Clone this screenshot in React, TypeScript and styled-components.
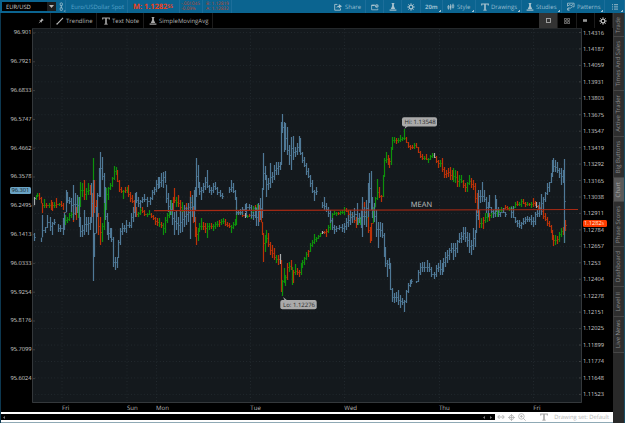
import React from "react";
import styled, { createGlobalStyle } from "styled-components";

const GlobalStyle = createGlobalStyle`
  * {
    box-sizing: border-box;
  }
  body {
    margin: 0;
    background: #000;
    overflow: hidden;
    font-family: "Open Sans", "Noto Sans", sans-serif;
    text-rendering: geometricPrecision;
  }
  svg {
    display: block;
    flex: none;
  }
`;

const Window = styled.div`
  width: 625px;
  height: 423px;
  display: flex;
  flex-direction: column;
  background: #000;
  overflow: hidden;
`;

const TopBar = styled.header`
  height: 13px;
  flex: none;
  display: flex;
  align-items: stretch;
  padding-left: 2px;
  background: #0b6490;
`;

const SymbolBox = styled.div`
  width: 54px;
  height: 9px;
  margin-top: 2px;
  padding-left: 4px;
  display: flex;
  align-items: center;
  justify-content: space-between;
  background: #000;
  color: #d4d4d4;
  font-size: 5.8px;
`;

const DropButton = styled.div`
  width: 9px;
  height: 9px;
  display: flex;
  align-items: center;
  justify-content: center;
  background: #1d1d1d;
`;

interface ICell {
  $w: number;
  $pad?: number;
  $gap?: number;
  $corner?: boolean;
}

const TopCell = styled.div<ICell>`
  width: ${(p) => p.$w}px;
  flex: none;
  padding-left: ${(p) => p.$pad ?? 5}px;
  display: flex;
  align-items: center;
  gap: ${(p) => p.$gap ?? 3}px;
  border-right: 1px solid #1c6e9a;
  background: ${(p) =>
    p.$corner
      ? "linear-gradient(135deg, transparent 50%, #9cc0d2 50%) right 1px bottom 1px / 2px 2px no-repeat"
      : "none"};
  color: #98bfd1;
  font-size: 6px;
  line-height: 8px;
  white-space: nowrap;
`;

const Instrument = styled.span`
  color: #55a2c9;
  font-size: 5.9px;
`;

const Mark = styled.span`
  color: #ee3f18;
  font-size: 7.4px;
  font-weight: 700;
`;

const MarkTail = styled.span`
  font-size: 5px;
  vertical-align: 1px;
`;

const Quote = styled.div`
  color: #c0452b;
  font-size: 4.7px;
  line-height: 4.8px;
`;

const Spacer = styled.div`
  flex: 1;
`;

const Body = styled.div`
  flex: 1;
  min-height: 0;
  display: flex;
`;

const Main = styled.main`
  width: 613px;
  display: flex;
  flex-direction: column;
  border-left: 1px solid #0d3850;
`;

const ToolBar = styled.div`
  height: 15px;
  flex: none;
  margin-left: 31px;
  display: flex;
  background: #000;
`;

const ToolCell = styled.div<ICell & { $active?: boolean }>`
  width: ${(p) => p.$w}px;
  flex: none;
  padding-left: ${(p) => p.$pad ?? 5}px;
  display: flex;
  align-items: center;
  gap: ${(p) => p.$gap ?? 3}px;
  border-right: 1px solid #1c1c1c;
  background: ${(p) => (p.$active ? "#333" : "#000")};
  color: #b4b4b4;
  font-size: 6px;
  white-space: nowrap;
`;

const ChartRow = styled.div`
  height: 375px;
  flex: none;
  display: flex;
`;

const Axis = styled.div<{ $side: "left" | "right" }>`
  position: relative;
  width: 31px;
  flex: none;
  padding-right: ${(p) => (p.$side === "left" ? 0.5 : 0)}px;
  padding-left: ${(p) => (p.$side === "right" ? 1 : 0)}px;
  text-align: ${(p) => (p.$side === "left" ? "right" : "left")};
  color: #d0d0d0;
  font-size: 5.7px;
`;

const AxisScale = styled.div<{ $step: number }>`
  margin-top: ${(p) => 4.8 - p.$step / 2}px;
  line-height: ${(p) => p.$step}px;
`;

const AxisLabel = styled.div<{ $step: number }>`
  height: ${(p) => p.$step}px;
`;

const PriceTag = styled.div<{ $top: number; $left: number; $w: number; $bg: string; $fg: string }>`
  position: absolute;
  left: ${(p) => p.$left}px;
  top: ${(p) => p.$top}px;
  width: ${(p) => p.$w}px;
  height: 7px;
  border-radius: 1.5px;
  background: ${(p) => p.$bg};
  color: ${(p) => p.$fg};
  line-height: 7px;
  padding: 0 1.5px;
  text-align: left;
`;

const TagTail = styled.span`
  font-size: 4px;
`;

const TimeRow = styled.div`
  height: 9px;
  flex: none;
  padding-left: 61px;
  display: flex;
  color: #b8b8b8;
  font-size: 6.1px;
  line-height: 9px;
`;

const TimeLabel = styled.span<{ $w: number }>`
  width: ${(p) => p.$w}px;
`;

const Footer = styled.footer`
  flex: 1;
  display: flex;
  align-items: flex-start;
  background: #fff;
  border-bottom: 1.5px solid #8fa9b5;
`;

const ScrollTrack = styled.div`
  width: 494px;
  height: 6px;
  margin-top: 2px;
  padding: 0 2px;
  display: flex;
  align-items: center;
  background: #000;
`;

const FooterTools = styled.div`
  flex: 1;
  height: 10px;
  padding-left: 2px;
  display: flex;
  align-items: center;
  gap: 3px;
  color: #b5b5b5;
  font-size: 5.8px;
  white-space: nowrap;
`;

const DrawingSet = styled.span`
  margin-left: 3px;
  margin-right: 4px;
`;

const SideBar = styled.aside`
  width: 12px;
  flex: none;
  display: flex;
  flex-direction: column;
  background: #292929;
  border-right: 1px solid #174c63;
`;

const SideTab = styled.div<{ $h: number; $active?: boolean }>`
  height: ${(p) => p.$h}px;
  flex: none;
  padding-right: 2px;
  display: flex;
  align-items: center;
  justify-content: center;
  background: ${(p) => (p.$active ? "#595959" : "#2e2e2e")};
  border-bottom: 1px solid #464646;
  border-left: 1px solid #3a3a3a;
  color: ${(p) => (p.$active ? "#a5a5a5" : "#8c8c8c")};
  font-size: 6px;
  line-height: 9px;
  white-space: nowrap;
`;

const SideText = styled.span`
  writing-mode: vertical-rl;
  transform: rotate(180deg);
`;

const leftLabels = ["96.901", "96.7921", "96.6833", "96.5747", "96.4662", "96.3578", "96.2495", "96.1413", "96.0333", "95.9254", "95.8176", "95.7099", "95.6024"];

const rightLabels = [
  "1.14316", "1.14187", "1.14059", "1.13931", "1.13803", "1.13675", "1.13547", "1.13419",
  "1.13292", "1.13165", "1.13038", "1.12911", "1.12784", "1.12657", "1.1253", "1.12404",
  "1.12278", "1.12151", "1.12025", "1.11899", "1.11774", "1.11648", "1.11523",
];

const days = [
  { name: "Fri", w: 65 },
  { name: "Sun", w: 29 },
  { name: "Mon", w: 94.3 },
  { name: "Tue", w: 94 },
  { name: "Wed", w: 94.7 },
  { name: "Thu", w: 94.3 },
  { name: "Fri", w: 20 },
];

const sideTabs = [
  { name: "Trade", h: 24.3 },
  { name: "Times And Sales", h: 53.7 },
  { name: "Active Trader", h: 45.7 },
  { name: "Big Buttons", h: 41 },
  { name: "Chart", h: 24.6, active: true },
  { name: "Phase Scores", h: 45 },
  { name: "Dashboard", h: 40 },
  { name: "Level II", h: 29.4 },
  { name: "Live News", h: 36.6 },
];

// each bar is "x high low" with an optional colour letter
const comparison = `34.3 233 241,41 238 242,42.3 215 237,45 227 233,47.5 215 228,50 217 231,52.5 222 235,54.5 219 225,58 224 232,60.5 225 232,63.3 218 235,64.7 213 230,66 190 212,67.7 192 203,69.3 197 204,71 198 212,73.3 185 220,75.5 193 215,77.6 195 213,79.3 197 227,80.6 217 237,82.3 225 237,84.3 210 235,86.6 217 232,88.3 217 235,90 217 230,91.5 183 223,93 180 281,94.7 233 257,96 207 233,97.6 193 217,99.3 168 197,100.7 152 197,102.3 157 180,104 173 203,105.3 187 220,107 213 235,108.3 222 240,110 228 238,111.7 228 242,113.3 237 267,115 257 270,117.3 257 268,118.6 240 258,120 228 245,122.3 223 235,124.3 225 232,126.6 220 233,129 222 228,131.3 213 228,133.3 207 222,135 193 217,136.7 192 203,138.7 197 207,140.7 200 208,142.7 197 203,144.7 194 202,147.3 197 207,150 197 205,152 190 200,154 187 195,156 180 192,158 177 189,159.7 177 188,161.3 173 187,163.3 172 188,165 171 183,166.7 185 203,168.3 193 212,170 200 215,172 203 225,174.3 212 235,176.6 210 230,178.7 217 235,180.7 210 233,182.7 212 232,184.7 205 227,186.7 207 225,188.7 203 222,190.3 197 239,192.3 195 217,194 190 222,195.3 187 210,196.3 158 197,198 165 188,199.7 182 195,201.3 187 200,203.3 183 193,205.3 177 190,207.3 170 188,209.3 185 193,211.3 187 195,213.3 183 193,215.3 182 190,217.7 187 195,220 190 197,222.3 193 199,229.3 187 193,231 180 192,233 183 193,235 190 200,236.3 197 215,238.3 210 215,240.7 209 215,242.7 207 215,245 204 212,246.7 203 217,249 204 210,251 205 218,253 212 220,255 207 218,256.7 208 226,258.7 203 226,260.3 198 220,262.3 188 218,263.3 153 190,265 166 180,266.7 175 197,268.7 178 190,270.7 163 188,272.7 172 183,274.7 165 180,276.7 162 175,278.3 162 175,280 162 170,281.7 122 165,282.7 114 133,284.3 122 152,285.7 123 150,287.3 127 155,289.3 145 165,291.3 137 170,293.3 136 160,295.3 147 157,297.3 143 155,299.3 136 152,300.7 138 155,302.7 152 163,304.7 157 167,306.7 163 175,308.7 168 178,310.7 175 187,312.3 180 193,314.7 190 201,316.7 187 195,322.3 202 208,324.3 197 210,326.3 203 212,328.3 207 217,330 210 223,332 218 230,334 225 234,336.7 226 232,339.3 225 230,342 224 232,344.7 223 233,346.7 218 230,348.7 215 227,350.7 210 225,352.7 212 223,354.7 208 220,357 203 225,359 213 223,361 210 228,362.3 197 237,364.3 207 225,366.3 200 227,368 183 217,369.7 173 203,371 171 210,372.7 197 218,374.3 203 222,376 210 237,378 222 248,380 222 237,382 223 238,384 233 257,385.7 247 267,387.7 260 277,389.3 258 269,390.7 263 290,392 288 302,394.3 293 303,396.3 292 302,398.3 290 305,400.3 295 308,402.3 298 305,404.7 300 312,406.3 290 303,408.3 283 293,410 280 287,411.7 279 284,416.7 281 283,418.7 270 282,420.7 263 275,422.7 262 272,424.7 262 272,427.3 260 272,429.7 263 272,431.7 267 277,434 272 279,436 265 277,438 263 272,440 260 275,442 263 275,443.7 258 272,445.7 252 267,447.7 250 263,449.7 248 260,451.7 243 253,453.7 243 260,455.7 243 257,457.7 240 253,459.7 233 243,461.7 232 243,463.7 227 240,465.7 227 242,467.7 232 247,469.7 233 253,471.3 240 255,473 228 250,475 230 247,476.7 210 233,478.5 190 220,480.7 190 203,482.3 182 202,484.3 190 202,486.3 197 213,488 202 217,489.7 195 208,491.7 207 213,493.7 210 218,495.3 195 217,496.7 199 212,498.7 207 217,500.7 212 217,503.3 208 213,505.7 212 217,511.7 207 218,513.3 206 218,515.3 217 223,517.3 220 227,519.3 220 228,521.3 222 229,523.3 218 225,525.3 217 224,527.3 216 222,529.3 217 222,531.3 215 225,533.3 217 227,535.3 212 225,537.3 210 217,539.3 202 217,541 194 215,543 197 210,545 192 202,547 183 195,549 182 192,551 173 183,552.7 160 177,553.7 158 172,555.7 160 172,557.7 162 173,559.7 168 178,561.7 168 185,563.3 170 183,564.3 159 243`;

const prices = `34.3 197 205 w,36 195 200 g,37.7 193 197 g,39.3 193 200 r,41.3 197 203 r,42.7 203 213 r,44.3 199 208 g,46.7 203 208 r,49 203 208 g,51 200 210 r,52.7 202 211 r,54.7 202 208 g,56.7 198 208 r,59 203 206 g,61.3 201 207 r,63.3 203 210 r,65.7 215 225 g,67.7 217 223 g,69.7 213 221 g,71.7 210 218 g,73.7 205 222 r,76 207 220 r,78 197 218 g,80 182 207 g,82 183 197 g,84 180 200 r,86 188 200 g,88 183 195 g,90 185 195 r,92 193 217 r,93 158 200 g,94.3 180 213 r,96.3 200 217 r,98.3 213 235 r,100.3 217 245 r,102.3 223 242 g,104.3 203 230 g,106.3 188 210 g,108 187 200 g,110 183 190 g,112 177 187 g,114 166 180 g,116 167 175 g,117.7 170 182 r,119.7 180 192 r,121.7 187 193 r,123 190 199 g,125 187 193 r,127 187 193 g,128.7 185 197 r,130.7 192 202 r,132.7 195 203 r,134.7 200 213 r,136.7 207 217 r,138.7 212 217 g,140.7 208 215 g,142.7 207 213 r,144.7 210 216 r,147.3 213 217 g,149.3 210 215 g,151.3 213 218 r,153.3 215 220 r,155.3 217 225 r,157.3 218 226 r,159.3 218 227 g,161.3 222 228 r,163.3 223 235 g,165 217 233 g,167 213 223 g,169 210 218 g,171 200 215 g,173 197 210 r,174.7 188 203 r,176.7 197 207 g,178.7 195 207 r,180.7 200 212 r,182.7 202 215 g,184.7 207 217 r,186.7 203 210 r,188.7 207 215 r,190 191 207 r,192 197 217 g,193.7 207 223 r,195.3 217 237 r,196.3 227 245 r,198 228 241 g,199.7 223 232 g,201.7 218 230 g,203.7 222 230 r,205.7 223 233 r,207.3 223 238 g,209.5 223 230 g,211.5 223 229 r,213.5 224 231 g,215.5 222 229 g,217.5 221 227 g,219.5 220 227 r,221.5 219 225 g,223.5 218 224 g,225.5 219 226 r,227.5 222 227 r,229.5 223 228 r,231 225 233 g,233 222 229 g,235 219 226 g,236.7 207 225 g,238.7 211 215 r,240.7 210 215 g,242.7 211 217 r,245 213 218 w,247 215 218 g,249 214 217 r,251 211 219 g,253 206 214 g,255 205 211 r,257 204 210 g,259 205 222 r,261 209 222 r,262.5 222 235 r,263.7 233 262 r,265 235 252 g,266.7 230 243 g,268.7 233 247 r,270.7 242 255 r,272.7 245 258 r,274.7 248 260 r,276.7 255 263 g,278.3 255 265 r,280.7 254 264 w,281.7 260 292 r,282.7 280 296 g,284.3 268 283 g,285.7 275 286 g,287.3 263 280 r,289.3 262 272 g,291.3 260 270 r,292.3 267 285 g,293.3 270 283 r,295.3 264 275 g,297.3 268 275 r,299.3 270 277 r,301 263 275 g,302.7 260 268 g,304.7 257 265 g,306.7 252 260 g,308.7 250 257 r,310.7 243 252 g,312.7 240 247 g,314.7 234 244 g,316.7 237 242 g,318.7 235 239 g,320.7 233 237 g,322.3 231 234 w,324.3 231 234 r,326.3 229 237 r,328.3 225 233 g,330.3 220 230 g,332.3 213 222 g,334.3 211 215 g,336.3 212 216 g,338.3 212 215 r,340.3 211 215 g,342.3 210 214 g,344.3 207 215 g,346.3 208 212 r,348.3 210 217 r,350.3 212 219 r,352.3 212 217 g,354.3 215 223 r,356.3 217 228 r,358.3 218 225 g,360.3 217 225 g,362.3 203 218 r,364.3 202 215 r,366.3 210 225 g,368.3 207 233 r,370.3 227 243 r,371.5 223 241 r,373.3 207 223 g,375.3 197 207 g,377.3 179 200 g,379.3 187 198 r,381 195 202 r,383 175 197 g,384.7 158 177 g,386.3 152 163 g,388 155 165 r,389.7 158 168 r,391.3 147 165 g,392.3 137 150 g,394.3 137 143 g,396.3 138 144 r,398.3 138 143 g,400.3 135 142 g,402.3 137 141 g,404.7 129 140 g,406.3 137 143 r,408.3 142 148 r,410.3 145 150 r,412.3 145 149 r,414.3 143 149 g,416.3 143 148 r,418.3 147 153 r,420.3 151 158 r,422.3 154 160 r,424.3 156 160 g,426.3 154 160 r,428.3 158 163 g,430.3 155 160 g,432.3 153 158 g,434.3 153 158 w,436.3 156 163 r,438.3 160 168 r,440.3 160 167 g,442.3 158 172 r,444.3 167 178 r,446.3 170 178 r,448.3 168 177 r,450 167 180 r,452 170 180 r,453.7 168 182 g,455.7 170 183 g,457.7 171 187 r,459.7 175 187 g,461.7 175 183 g,463.7 180 188 r,465.7 183 192 r,467.7 182 192 g,469.7 175 185 g,471.7 178 188 r,473.7 180 190 r,475.3 183 203 r,477 193 213 r,479 210 228 r,481.3 218 228 g,483.3 217 229 r,485.3 213 223 g,487.3 213 222 g,489.3 213 221 r,491.3 212 218 g,493.3 210 215 g,495.3 208 217 g,497.3 210 217 g,499.3 209 213 g,501.3 207 212 g,503.3 208 213 r,505.3 205 209 r,507.3 206 210 r,509.3 207 211 g,511.3 206 210 g,513.3 206 211 g,515.3 202 208 g,517.3 201 206 r,519.3 202 206 g,521.3 199 207 g,523.3 199 204 r,525.3 202 207 r,527.3 202 206 g,529.3 203 206 r,531.3 202 208 g,533.3 198 207 r,535.3 201 206 r,536.7 202 208 w,538.7 205 210 r,541 204 212 r,543 210 219 r,545 213 221 r,547 217 226 r,549 221 227 r,551 225 233 r,552.7 230 240 r,553.7 235 246 r,555.7 235 245 g,557.7 236 244 r,559.7 232 242 g,561.7 228 237 g,563.3 227 235 r,564.7 220 243 g,565.3 220 231 r`;

interface IBar {
  x: number;
  hi: number;
  lo: number;
  tone: string;
}

const parseBars = (text: string): IBar[] =>
  text.split(",").map((item) => {
    const [x, hi, lo, tone] = item.trim().split(" ");
    return { x: Math.floor(Number(x)) + 0.5, hi: Number(hi), lo: Number(lo), tone: tone ?? "b" };
  });

const tones: { [key: string]: string } = {
  b: "#4f7997",
  g: "#0d920b",
  r: "#bd3208",
  w: "#a9adae",
};

function Bars({ bars }: { bars: IBar[] }) {
  return (
    <>
      {bars.map(({ x, hi, lo, tone }, index) => {
        const next = bars[index + 1];
        const joined = next && next.x - x < 4;
        const close = joined
          ? (Math.max(hi, next.hi) + Math.min(lo, next.lo)) / 2
          : (hi + lo) / 2;
        const level = Math.floor(close) + 0.5;
        return (
          <g key={index} stroke={tones[tone]}>
            <path d={`M${x} ${hi}V${lo}`} strokeWidth="1.2" />
            <path d={`M${x} ${level}H${joined ? next.x : x + 1.5}`} strokeOpacity="0.75" />
          </g>
        );
      })}
    </>
  );
}

const comparisonBars = parseBars(comparison);
const priceBars = parseBars(prices);
const dayLines = [62, 127, 156.5, 250.5, 344.5, 439.5, 533.5];

function PriceChart() {
  return (
    <svg width="550" height="375" viewBox="32 28 550 375" fill="none">
      <rect x="32" y="28" width="550" height="375" fill="#14191d" />
      {rightLabels.map((label, i) => (
        <path key={label} d={`M35 ${32.5 + i * 16.45}H580`} stroke="#262d32" strokeWidth="0.8" strokeDasharray="1 2.2" />
      ))}
      {dayLines.map((x) => (
        <path key={x} d={`M${x} 29V402`} stroke="#262d32" strokeWidth="0.8" strokeDasharray="1 2.2" />
      ))}
      {leftLabels.map((label, i) => (
        <path key={label} d={`M33 ${33 + i * 28.8}h2`} stroke="#4c4c4c" strokeWidth="0.7" />
      ))}
      {rightLabels.map((label, i) => (
        <path key={label} d={`M579 ${32.5 + i * 16.45}h2`} stroke="#4c4c4c" strokeWidth="0.7" />
      ))}
      <path d="M32.5 28V402.5H581.5V28" stroke="#34383b" />
      <path d="M32 28.5H582" stroke="#24282b" />
      <Bars bars={priceBars} />
      <Bars bars={comparisonBars} />
      <path d="M154 210.6L578 209.5" stroke="#a82a14" strokeWidth="1.1" />
      <text x="410.8" y="206.6" fill="#c2c4c5" fontSize="7.5">
        MEAN
      </text>
      <path d="M283 297l2 4h3zM404.5 129l1.5-4h3z" fill="#a9a9a9" />
      <rect x="280.3" y="300" width="36.4" height="9.3" rx="2" fill="#aaa" />
      <text x="283" y="306.9" fill="#292929" fontSize="6">
        Lo: 1.12276
      </text>
      <rect x="402" y="117.2" width="35" height="9.2" rx="2" fill="#aaa" />
      <text x="404.5" y="124" fill="#292929" fontSize="6">
        Hi: 1.13548
      </text>
    </svg>
  );
}

interface IIcon {
  size?: number;
  color?: string;
}

function FlaskIcon({ size = 8, color = "#a7c2ce" }: IIcon) {
  return (
    <svg width={size} height={size} viewBox="0 0 8 8" fill={color}>
      <path d="M2.6 0h2.8v.7h-.5V3l1.3 2.9H1.8L3.1 3V.7h-.5z" />
      <path d="M.6 6.5h6.8v1.2H.6z" />
    </svg>
  );
}

function TextIcon({ size = 8, color = "#a7c2ce" }: IIcon) {
  return (
    <svg width={size} height={size} viewBox="0 0 8 8" stroke={color} fill="none">
      <path d="M.7 2.6V1h6.6v1.6" strokeWidth="1.1" />
      <path d="M4 1v6" strokeWidth="1.6" />
      <path d="M2.3 7.2h3.4" strokeWidth=".9" />
    </svg>
  );
}

function GearIcon({ size = 8, color = "#a7c2ce" }: IIcon) {
  return (
    <svg width={size} height={size} viewBox="0 0 8 8" stroke={color} fill="none">
      <circle cx="4" cy="4" r="1.9" strokeWidth="1.3" />
      <path d="M4 .3v1.4M4 6.3v1.4M.3 4h1.4M6.3 4h1.4M1.4 1.4l1 1M5.6 5.6l1 1M1.4 6.6l1-1M5.6 2.4l1-1" strokeWidth="1" />
    </svg>
  );
}

function ShareIcon() {
  return (
    <svg width="8" height="8" viewBox="0 0 8 8" stroke="#a7c2ce" fill="none">
      <path d="M3.4 1.4H.7v5.8h5.8V5.4" strokeWidth=".9" />
      <path d="M2.3 5.2Q2.4 2.9 4.8 2.8V1L8 3.3 4.8 5.4V4Q3.3 3.9 2.3 5.2z" fill="#a7c2ce" stroke="none" />
    </svg>
  );
}

function AlertIcon() {
  return (
    <svg width="8" height="8" viewBox="0 0 8 8" stroke="#a7c2ce" fill="none">
      <path d="M4 2.2H.6v4.6h6.2V5.6" strokeWidth=".8" />
      <path d="M.6 2.4h3" strokeWidth="1.2" />
      <circle cx="5.8" cy="3" r="1.8" fill="#a7c2ce" stroke="none" />
      <path d="M5.8 2v1.2h.8" stroke="#0b6490" strokeWidth=".6" />
    </svg>
  );
}

function CandleIcon() {
  return (
    <svg width="8" height="8" viewBox="0 0 8 8" stroke="#a7c2ce" fill="none">
      <path d="M1.5 2v4.6M3.6 1v6M6 .6v5" strokeWidth=".7" />
      <path d="M.8 3h1.4v2.4H.8zM5.2 2h1.6v2.4H5.2z" strokeWidth=".6" />
      <path d="M3 2.5h1.3v3H3z" fill="#a7c2ce" stroke="none" />
    </svg>
  );
}

function PatternIcon() {
  return (
    <svg width="8" height="9" viewBox="0 0 8 9" stroke="#a7c2ce" fill="none" strokeWidth=".8">
      <path d="M.5 1.2h6.6v3.6H5.5M.5 1.2v3L3 2.5l1 1.3 2.2-1.5M.7 8l1-2.4 1.4.8L5.4 4.6M.7 6v2.2h1.8" />
    </svg>
  );
}

function PinIcon() {
  return (
    <svg width="6" height="6" viewBox="0 0 6 6" fill="#bbb">
      <path d="M3.7.3l2 2-1 .3-1 1 .1 1.2L1.2 2.4l1.2.1 1-1z" />
      <path d="M2.3 3l.7.7L.5 5.6z" />
    </svg>
  );
}

function LinkIcon() {
  return (
    <svg width="7" height="10" viewBox="0 0 7 10" stroke="#a2c3d2" fill="none" strokeWidth=".8">
      <rect x="1.2" y=".8" width="2.2" height="3" rx="1" />
      <rect x="1.2" y="5.5" width="2.2" height="3" rx="1" />
      <path d="M2.3 3v3.5" />
      <path d="M6.2 8v1.6H4.6z" fill="#9cc0d2" stroke="none" />
    </svg>
  );
}

function Header() {
  return (
    <TopBar>
      <SymbolBox>
        EUR/USD
        <DropButton>
          <svg width="5" height="3" viewBox="0 0 5 3">
            <path d="M0 0h5L2.5 3z" fill="#bbb" />
          </svg>
        </DropButton>
      </SymbolBox>
      <TopCell $w={10} $pad={3}>
        <LinkIcon />
      </TopCell>
      <TopCell $w={62}>
        <Instrument>Euro/USDollar Spot</Instrument>
      </TopCell>
      <TopCell $w={52}>
        <Mark>
          M: 1.1282<MarkTail>55</MarkTail>
        </Mark>
      </TopCell>
      <TopCell $w={23} $pad={1}>
        <Quote>
          -.001045
          <br />
          -0.09%
        </Quote>
      </TopCell>
      <TopCell $w={29} $pad={3}>
        <Quote>
          B: 1.12819
          <br />
          A: 1.12832
        </Quote>
      </TopCell>
      <Spacer />
      <TopCell $w={36} $pad={4}>
        <ShareIcon />
        Share
      </TopCell>
      <TopCell $w={18} $pad={5}>
        <AlertIcon />
      </TopCell>
      <TopCell $w={18} $pad={5}>
        <FlaskIcon />
      </TopCell>
      <TopCell $w={19} $pad={5}>
        <GearIcon />
      </TopCell>
      <TopCell $w={22} $pad={4} $corner>
        <b>20m</b>
      </TopCell>
      <TopCell $w={33} $pad={4} $gap={2} $corner>
        <CandleIcon />
        Style
      </TopCell>
      <TopCell $w={46} $pad={5} $gap={2} $corner>
        <TextIcon />
        Drawings
      </TopCell>
      <TopCell $w={40} $pad={4} $gap={2} $corner>
        <FlaskIcon />
        Studies
      </TopCell>
      <TopCell $w={43} $pad={5} $gap={2} $corner>
        <PatternIcon />
        Patterns
      </TopCell>
      <TopCell $w={20} $pad={7} $corner>
        <svg width="7" height="6" viewBox="0 0 7 6" stroke="#a7c2ce">
          <path d="M0 .7h1M2 .7h4M0 2.9h1M2 2.9h4M0 5.1h1M2 5.1h4" strokeWidth=".9" />
        </svg>
      </TopCell>
    </TopBar>
  );
}

function Tools() {
  return (
    <ToolBar>
      <ToolCell $w={19} $pad={6}>
        <PinIcon />
      </ToolCell>
      <ToolCell $w={46} $gap={2}>
        <svg width="8" height="8" viewBox="0 0 8 8">
          <path d="M1 7.2L7 .8" stroke="#bbb" strokeWidth="1.1" />
          <path d="M.3 7h1.2" stroke="#bbb" />
        </svg>
        Trendline
      </ToolCell>
      <ToolCell $w={47} $gap={2}>
        <TextIcon color="#aaa" />
        Text Note
      </ToolCell>
      <ToolCell $w={69} $pad={5} $gap={2}>
        <FlaskIcon color="#aaa" />
        SimpleMovingAvg
      </ToolCell>
      <Spacer />
      <ToolCell $w={19} $pad={7} $active>
        <svg width="5" height="5" viewBox="0 0 5 5">
          <rect x=".5" y=".5" width="4" height="4" fill="none" stroke="#aaa" strokeWidth=".9" />
        </svg>
      </ToolCell>
      <ToolCell $w={19} $pad={6}>
        <svg width="6" height="6" viewBox="0 0 6 6" fill="none" stroke="#999" strokeWidth=".7">
          <path d="M.4.4h2v2h-2zM3.6.4h2v2h-2zM.4 3.6h2v2h-2zM3.6 3.6h2v2h-2z" />
        </svg>
      </ToolCell>
      <ToolCell $w={18} $pad={6}>
        <svg width="4" height="3" viewBox="0 0 4 3">
          <path d="M0 0h4v3H0z" fill="#777" />
          <path d="M0 1.5h4" stroke="#aaa" strokeWidth=".6" />
        </svg>
      </ToolCell>
      <ToolCell $w={18} $pad={4}>
        <GearIcon color="#c4c4c4" />
      </ToolCell>
    </ToolBar>
  );
}

function App() {
  return (
    <Window>
      <GlobalStyle />
      <Header />
      <Body>
        <Main>
          <Tools />
          <ChartRow>
            <Axis $side="left">
              <AxisScale $step={28.8}>
                {leftLabels.map((label) => (
                  <AxisLabel key={label} $step={28.8}>
                    {label}
                  </AxisLabel>
                ))}
              </AxisScale>
              <PriceTag $top={159} $left={9} $w={21} $bg="#6aa3c4" $fg="#10181d">
                96.301
              </PriceTag>
            </Axis>
            <PriceChart />
            <Axis $side="right">
              <AxisScale $step={16.45}>
                {rightLabels.map((label) => (
                  <AxisLabel key={label} $step={16.45}>
                    {label}
                  </AxisLabel>
                ))}
              </AxisScale>
              <PriceTag $top={191.5} $left={0.5} $w={24} $bg="#ff3b00" $fg="#ffe8de">
                1.1282<TagTail>5</TagTail>
              </PriceTag>
            </Axis>
          </ChartRow>
          <TimeRow>
            {days.map((day, index) => (
              <TimeLabel key={index} $w={day.w}>
                {day.name}
              </TimeLabel>
            ))}
          </TimeRow>
          <Footer>
            <ScrollTrack>
              <svg width="2" height="3" viewBox="0 0 2 3">
                <path d="M2 0v3L0 1.5z" fill="#777" />
              </svg>
              <Spacer />
              <svg width="10" height="3" viewBox="0 0 10 3">
                <path d="M2 0v3L0 1.5zM7 0v3l2-1.5z" fill="#777" />
              </svg>
            </ScrollTrack>
            <FooterTools>
              <svg width="8" height="6" viewBox="0 0 8 6" stroke="#b0b0b0" fill="none" strokeWidth=".9">
                <path d="M1 3h6M2.6 1L.7 3l1.9 2M5.4 1l1.9 2-1.9 2" />
              </svg>
              <svg width="7" height="7" viewBox="0 0 7 7" stroke="#b0b0b0" fill="none" strokeWidth=".8">
                <circle cx="3.5" cy="3.5" r="2.2" />
                <path d="M3.5 0v7M0 3.5h7" />
              </svg>
              <svg width="8" height="8" viewBox="0 0 8 8" stroke="#b0b0b0" fill="none" strokeWidth=".8">
                <circle cx="3.4" cy="3.4" r="2.8" />
                <path d="M2 3.4h2.8M3.4 2v2.8M5.4 5.4l2.3 2.3" />
              </svg>
              <Spacer />
              <TextIcon color="#a5a5a5" />
              <DrawingSet>Drawing set: Default</DrawingSet>
            </FooterTools>
          </Footer>
        </Main>
        <SideBar>
          {sideTabs.map((tab) => (
            <SideTab key={tab.name} $h={tab.h} $active={tab.active}>
              <SideText>{tab.name}</SideText>
            </SideTab>
          ))}
        </SideBar>
      </Body>
    </Window>
  );
}

export default App;
